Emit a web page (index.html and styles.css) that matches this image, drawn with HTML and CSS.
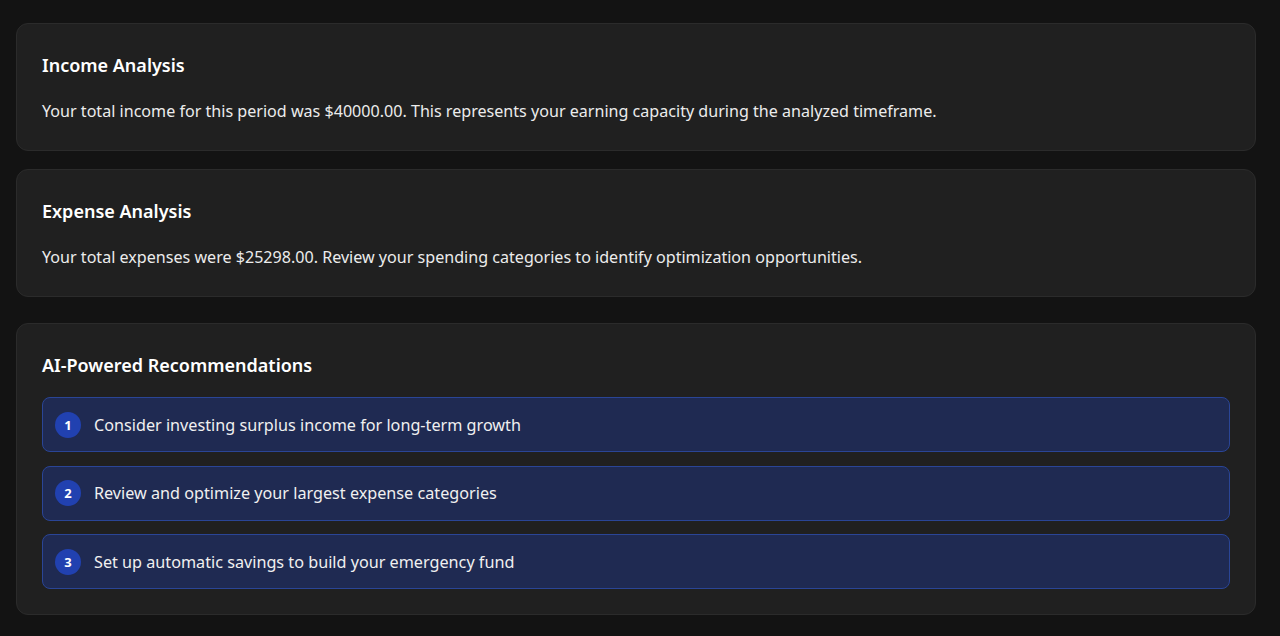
FILE: index.html
```html
<!DOCTYPE html>
<html lang="en">
<head>
<meta charset="utf-8">
<title>Analysis</title>
<link rel="stylesheet" href="styles.css">
</head>
<body>
<main class="page">
  <section class="card card-income">
    <h2 class="card-title">Income Analysis</h2>
    <p class="card-text">Your total income for this period was $40000.00. This represents your earning capacity during the analyzed timeframe.</p>
  </section>
  <section class="card card-expense">
    <h2 class="card-title">Expense Analysis</h2>
    <p class="card-text">Your total expenses were $25298.00. Review your spending categories to identify optimization opportunities.</p>
  </section>
  <section class="card card-recs">
    <h2 class="card-title">AI-Powered Recommendations</h2>
    <ol class="rec-list">
      <li class="rec-item"><span class="rec-badge">1</span><span class="rec-text">Consider investing surplus income for long-term growth</span></li>
      <li class="rec-item"><span class="rec-badge">2</span><span class="rec-text">Review and optimize your largest expense categories</span></li>
      <li class="rec-item"><span class="rec-badge">3</span><span class="rec-text">Set up automatic savings to build your emergency fund</span></li>
    </ol>
  </section>
</main>
</body>
</html>
```

FILE: styles.css
```css
* { box-sizing: border-box; }
html, body { margin: 0; padding: 0; }
body {
  background: #131313;
  color: #e8e8e8;
  font-family: "Noto Sans", "Open Sans", "DejaVu Sans", sans-serif;
  height: 636px;
  overflow: hidden;
}
.page {
  padding: 23px 24px 0 16px;
  display: flex;
  flex-direction: column;
}
.card {
  background: #202020;
  border: 1px solid #2b2b2b;
  border-radius: 12px;
  padding: 27px 25px 26px 25px;
}
.card-income { margin-bottom: 18px; }
.card-expense { margin-bottom: 26px; }
.card-recs { padding-bottom: 25px; }
.card-title {
  margin: 0 0 19px 0;
  font-size: 18px;
  line-height: 28px;
  font-weight: 600;
  color: #ffffff;
}
.card-recs .card-title { margin-bottom: 18px; }
.card-text {
  margin: 0;
  font-size: 16.1px;
  line-height: 26px;
  color: #ececec;
}
.rec-list {
  list-style: none;
  margin: 0;
  padding: 0;
  display: flex;
  flex-direction: column;
  gap: 13.5px;
}
.rec-item {
  display: flex;
  align-items: center;
  gap: 13px;
  height: 55px;
  padding: 0 12px;
  background: #1f2a52;
  border: 1px solid #2a4596;
  border-radius: 8px;
}
.rec-badge {
  flex: none;
  width: 26px;
  height: 26px;
  border-radius: 50%;
  background: #2141b0;
  color: #fff;
  font-size: 13px;
  font-weight: 700;
  display: flex;
  align-items: center;
  justify-content: center;
}
.rec-text {
  font-size: 16.2px;
  color: #f0f0f0;
}
```
